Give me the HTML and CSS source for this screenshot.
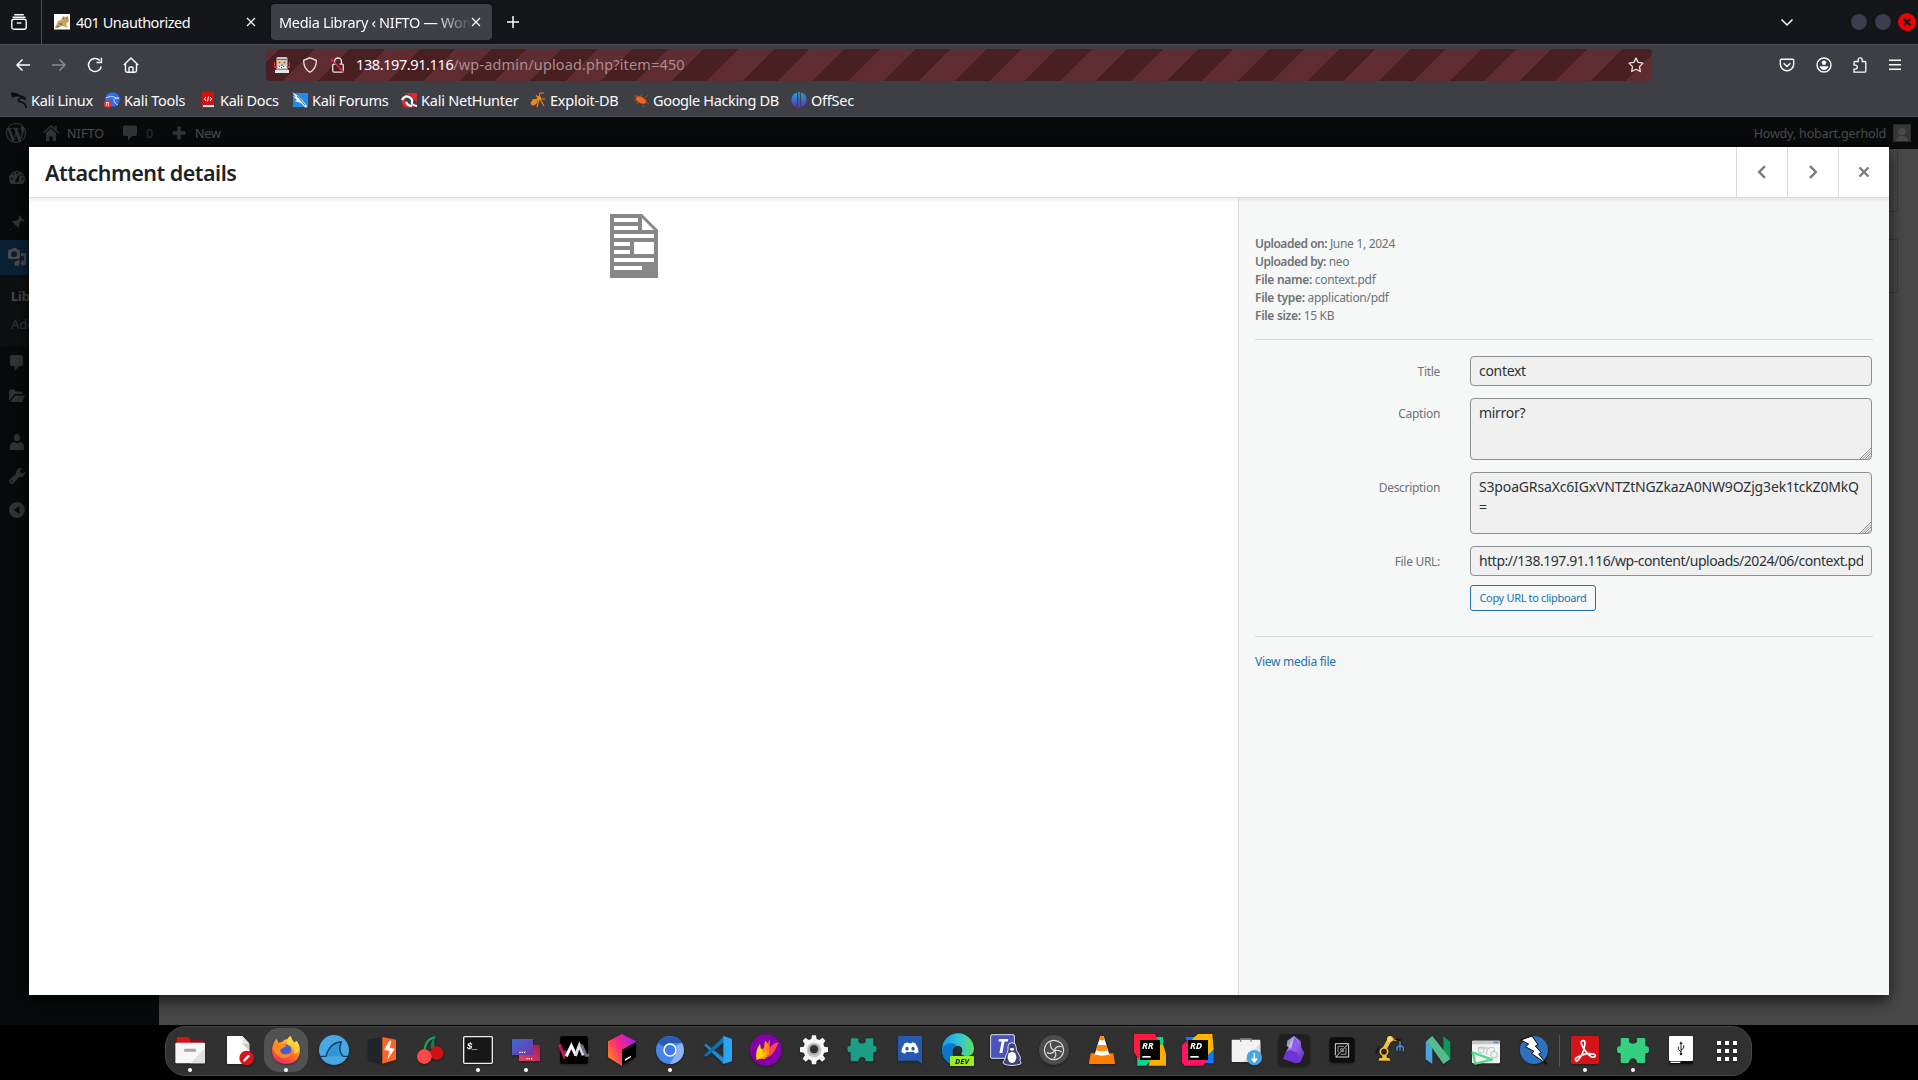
FILE: index.html
```html
<!DOCTYPE html>
<html lang="en">
<head>
<meta charset="utf-8">
<title>Media Library ‹ NIFTO — WordPress</title>
<link rel="stylesheet" href="styles.css">
</head>
<body>
<header class="browser">
  <div class="tabs">
    <div class="recent"><svg width="16" height="16" viewBox="0 0 16 16" fill="none" stroke="#fbfbfe" stroke-width="1.4"><path d="M3.2.8h9.6M1.5 3.2h13"/><rect x=".8" y="5.2" width="14.4" height="10" rx="2"/><path d="M5.8 9h4.6"/></svg></div>
    <div class="tab">
      <svg class="fav" width="16" height="16" viewBox="0 0 16 16"><path fill="#fff" d="M0 0h16v16H0z"/><path fill="#c8a265" d="M1 14l3-7 3-1 2-4 2 1 3-1 1 5-3 3 2 4-5-2-4 1z"/><path fill="#7a5a2c" d="M9 4h1v1H9zM12 4h1v1h-1zM5 9l4 1-3 1zM1 14l3-2 2 1z"/><path fill="none" stroke="#222" d="M0 15.500h16" opacity=".5"/></svg>
      <span class="tabtext t1">401 Unauthorized</span>
      <svg class="x" width="10" height="10" viewBox="0 0 10 10"><path d="M1 1l8 8M9 1L1 9"/></svg>
    </div>
    <div class="tab active">
      <span class="tabtext t2">Media Library ‹ NIFTO — WordPress</span>
      <svg class="x" width="10" height="10" viewBox="0 0 10 10"><path d="M1 1l8 8M9 1L1 9"/></svg>
    </div>
    <svg class="plus" width="14" height="14" viewBox="0 0 14 14"><path d="M7 1v12M1 7h12" stroke="#fbfbfe" stroke-width="1.5"/></svg>
    <div class="wincontrols">
      <svg class="chev" width="14" height="9" viewBox="0 0 14 9"><path d="M1.500 1.500L7 7l5.500-5.500" fill="none" stroke="#fbfbfe" stroke-width="1.5"/></svg>
      <span class="circle"></span><span class="circle"></span>
      <svg width="18" height="18" viewBox="0 0 18 18"><circle cx="9" cy="9" r="9" fill="#f00000"/><path d="M5.500 5.500l7 7M12.500 5.500l-7 7" stroke="#16171b" stroke-width="2.300"/></svg>
    </div>
  </div>
  <div class="toolbar">
    <nav class="navbtns">
      <svg width="16" height="16" viewBox="0 0 16 16" fill="none" stroke="#fbfbfe" stroke-width="1.5"><path d="M15 8H2M7.500 2.500L2 8l5.500 5.500"/></svg>
      <svg width="16" height="16" viewBox="0 0 16 16" fill="none" stroke="#88898d" stroke-width="1.5"><path d="M1 8h13M8.500 2.500L14 8l-5.500 5.500"/></svg>
      <svg width="16" height="16" viewBox="0 0 16 16" fill="none" stroke="#fbfbfe" stroke-width="1.500"><path d="M14.300 9.500a6.500 6.500 0 1 1-1.600-6M9.500 5.600h4.900V.8"/></svg>
      <svg width="16" height="16" viewBox="0 0 16 16" fill="none" stroke="#fbfbfe" stroke-width="1.400"><path d="M.8 8L8 1l7.200 7M2.500 7v6.500q0 1.700 1.700 1.700h7.600q1.700 0 1.700-1.700V7M6 15v-4q0-1 1-1h2q1 0 1 1v4"/></svg>
    </nav>
    <div class="urlbar">
      <svg class="bot" width="16" height="16" viewBox="0 0 16 16"><path fill="#c8c8c8" d="M3.500 0h9l1 1v11H2.500V1z"/><path fill="#e22b33" d="M0 5h1v4h2v2H0zM15 5h1v6h-3V9h2z"/><path fill="#ffb13d" d="M4 4h3v3H4zM9 4h3v3H9z"/><path fill="#b02a00" d="M5 5h1v1H5zM10 5h1v1h-1z"/><path fill="#6e6e6e" d="M3 2h10v1H3zM7.500 7h1v2h-1z"/><path fill="#fff" d="M4 9h8v2H4z"/><path fill="#444" d="M5 9h1v1H5zM7 10h1v1H7zM9 9h1v1H9z"/><path fill="#e6e6e6" d="M1 13h14v3H1z"/><path fill="#888" d="M2 12h12v1H2z"/></svg>
      <svg width="16" height="16" viewBox="0 0 16 16" fill="none" stroke="#ece0e1" stroke-width="1.300"><path d="M8 .8l6.300 2.500q.3 8-6.300 12Q1.400 11.300 1.700 3.300z"/></svg>
      <svg width="16" height="16" viewBox="0 0 16 16" fill="none" stroke="#ece0e1" stroke-width="1.300"><path d="M4.500 6V4.500a3.500 3.500 0 0 1 7 0V7"/><path d="M6 7.200H4.200q-1.500 0-1.500 1.500v5q0 1.500 1.500 1.500h7.600q1.500 0 1.500-1.500v-5q0-1.500-1.500-1.500H9.500"/><path d="M1 2l13 13.500" stroke="#f0244b" stroke-width="1.500"/></svg>
      <span class="url"><span class="host">138.197.91.116</span><span class="path">/wp-admin/upload.php?item=450</span></span>
      <svg class="star" width="16" height="16" viewBox="0 0 16 16" fill="none" stroke="#ece0e1" stroke-width="1.300" stroke-linejoin="round"><path d="M8 1l2.100 4.400 4.900.7-3.500 3.500.8 4.900L8 12.200l-4.300 2.300.8-4.900L1 6.100l4.900-.7z"/></svg>
    </div>
    <div class="actions">
      <svg width="16" height="16" viewBox="0 0 16 16" fill="none" stroke="#fbfbfe" stroke-width="1.400"><path d="M2.500 2.200h11q1.200 0 1.200 1.200V7a6.700 6.700 0 0 1-13.400 0V3.400q0-1.200 1.200-1.200zM4.600 6.300L8 9.500l3.400-3.200"/></svg>
      <svg width="16" height="16" viewBox="0 0 16 16"><circle cx="8" cy="8" r="7" fill="none" stroke="#fbfbfe" stroke-width="1.400"/><circle cx="8" cy="5.800" r="2.300" fill="#fbfbfe"/><path d="M3.500 9.300h9Q11.500 13 8 13T3.500 9.300z" fill="#fbfbfe"/></svg>
      <svg width="16" height="16" viewBox="0 0 16 16" fill="none" stroke="#fbfbfe" stroke-width="1.300"><path d="M2 15.200h10.500q1.300 0 1.300-1.300V5.500q0-1-1-1h-2.600V2.800a2 2 0 0 0-4 0v1.700H3q-1 0-1 1v2.600h1.300a2 2 0 0 1 0 4H2z"/></svg>
      <svg width="12" height="16" viewBox="0 0 12 16" stroke="#fbfbfe" stroke-width="1.400"><path d="M0 3.200h12M0 7.700h12M0 12.300h12"/></svg>
    </div>
  </div>
  <nav class="bookmarks">
    <a><svg width="16" height="16" viewBox="0 0 16 16" fill="none" stroke="#0b0b0c" stroke-width="1.600"><path d="M0 1q5 0 9 3M1 5q3-2 8-1 5 1 5 3-4-2-6 0t2 3q5 1 5 6M0 3l5-1"/></svg><span>Kali Linux</span></a>
    <a class="wide"><svg width="16" height="16" viewBox="0 0 16 16"><circle cx="8.500" cy="7.500" r="7.300" fill="#2f6fe8"/><path fill="none" stroke="#cfe2ff" d="M2 6q5-3 8-1t5 1q-6 0-5 3t4 4"/><circle cx="3.500" cy="12" r="3.800" fill="#e3352f"/><path stroke="#fff" d="M2 10.500h3M2.600 10.500v3.500M4.400 10.500v3.500" stroke-width=".7"/></svg><span>Kali Tools</span></a>
    <a><svg width="16" height="16" viewBox="0 0 16 16"><path fill="#d21313" d="M2 0h12v16H2z"/><path fill="#f2f2f2" d="M3 13h11v2H3z"/><path d="M6 5L4.500 7 6 9M10 5l1.500 2L10 9M8.500 4.500l-1 5" stroke="#fff" fill="none"/></svg><span>Kali Docs</span></a>
    <a><svg width="16" height="16" viewBox="0 0 16 16"><path fill="#1d8bf0" d="M1 1h15v14H1z"/><path fill="#fff" d="M0 0l6 4 5 5 4 5-1 2-5-5-6-2 2-1-4-4 3 1z"/><path stroke="#223" d="M5 4l8 9" stroke-width=".8"/></svg><span>Kali Forums</span></a>
    <a class="wide"><svg width="16" height="16" viewBox="0 0 16 16"><path fill="#e3262e" d="M3 1h13v10l-6-7z"/><path fill="#e3262e" d="M0 9l4-2 4 6 5 1-4 2-6-1z"/><path fill="none" stroke="#fff" stroke-width="2.200" d="M1 8q3-5 7-3t3 5 5 4M5 10q2 4 6 4"/></svg><span>Kali NetHunter</span></a>
    <a class="wide"><svg width="16" height="16" viewBox="0 0 16 16" fill="none" stroke="#f08a1c" stroke-width="1.100"><path d="M9 6l-5 7M8 7L2 8M9 7l-2 8M10 7l5 0M10 7l4 7M9 6l1-5h4M8 6L6 3M3 9l3 2"/><ellipse cx="4" cy="10.500" rx="3" ry="1.900" fill="#f08a1c" transform="rotate(-35 4 10.500)"/><circle cx="9" cy="6" r="1.500" fill="#f08a1c"/></svg><span>Exploit-DB</span></a>
    <a><svg width="16" height="16" viewBox="0 0 16 16"><ellipse cx="8" cy="8" rx="5.500" ry="3.200" fill="#f0641e" transform="rotate(28 8 8)"/><path stroke="#c4541c" stroke-width=".8" d="M1 4h4M1 8h3M3 12l3-2M10 13l1 2M12 6l3-3M13 10l3 2M8 4l1-2" fill="none"/></svg><span>Google Hacking DB</span></a>
    <a class="wide"><svg width="16" height="16" viewBox="0 0 16 16"><defs><linearGradient id="os" gradientUnits="userSpaceOnUse" x1="0" y1="0" x2="0" y2="16"><stop stop-color="#25a7d0"/><stop offset="1" stop-color="#5b2bc6"/></linearGradient></defs><path fill="url(#os)" d="M6 .5Q0 2.500.5 8.500q.3 4 4.500 6.500l1-5zM10 .5q6 2 5.500 8-.3 4-4.500 6.500l-1-5zM7.200 0h1.600v10l1 6H6.300l.9-6z"/></svg><span>OffSec</span></a>
  </nav>
</header>

<main class="page">
  <div class="adminbar">
    <svg class="wp" width="20" height="20" viewBox="0 0 20 20"><path fill="#a7aaad" d="M20 10c0-5.510-4.490-10-10-10C4.480 0 0 4.490 0 10c0 5.520 4.480 10 10 10 5.510 0 10-4.480 10-10zM7.780 15.370L4.370 6.220c.55-.02 1.170-.08 1.170-.08.5-.06.44-1.130-.06-1.110 0 0-1.450.11-2.370.11-.18 0-.37 0-.58-.01C4.120 2.690 6.870 1.110 10 1.110c2.330 0 4.450.87 6.050 2.340-.68-.11-1.650.39-1.650 1.580 0 .74.45 1.360.9 2.100.35.61.55 1.360.55 2.460 0 1.490-1.400 5-1.400 5l-3.030-8.370c.54-.02.82-.17.82-.17.5-.05.44-1.250-.06-1.220 0 0-1.440.12-2.380.12-.87 0-2.330-.12-2.330-.12-.5-.03-.56 1.200-.06 1.220l.92.080 1.260 3.410zM17.410 10c.24-.64.74-1.870.43-4.250.7 1.290 1.050 2.710 1.050 4.250 0 3.290-1.730 6.240-4.400 7.780.97-2.590 1.940-5.200 2.920-7.780zM6.100 18.090C3.120 16.650 1.110 13.530 1.110 10c0-1.300.23-2.480.72-3.590C3.250 10.300 4.670 14.200 6.100 18.090zm4.030-6.630l2.580 6.980c-.86.29-1.760.45-2.710.45-.79 0-1.570-.11-2.290-.33.81-2.380 1.620-4.740 2.420-7.100z"/></svg>
    <svg class="home" width="16" height="16" viewBox="0 0 16 16" fill="#a7aaad"><path d="M8 3.500l5 4.500v8H9.800v-4.500H6.200V16H3V8z"/><path d="M8 0L0 7.200l1 1L8 2l7 6.200 1-1-2.300-2V1h-2v2.400z"/></svg>
    <span class="txt site">NIFTO</span>
    <svg class="cmt" width="14" height="16" viewBox="0 0 14 16" fill="#a7aaad"><path d="M2 .5h10q2 0 2 2v6.500q0 2-2 2H9l-4 4.700V11H2q-2 0-2-2V2.500q0-2 2-2z"/></svg>
    <span class="txt zero">0</span>
    <svg class="add" width="14" height="14" viewBox="0 0 14 14"><path d="M5.300.5h3.400v4.800H13.500v3.400H8.700v4.800H5.300V8.700H.5V5.300h4.800z" fill="#a7aaad"/></svg>
    <span class="txt new">New</span>
    <span class="txt howdy">Howdy, hobart.gerhold</span>
    <svg class="avatar" width="18" height="18" viewBox="0 0 18 18"><path fill="#8c8f94" d="M0 0h18v18H0z"/><path fill="#b4b4b6" d="M1 1h16v16H1z"/><circle cx="9" cy="7.500" r="3.800" fill="#f4f4f4"/><path fill="#f4f4f4" d="M3 17q1-5 6-5t6 5z"/></svg>
  </div>
  <div class="admin">
    <aside class="menu">
      <a class="m1"><svg viewBox="0 0 16 16"><path fill-rule="evenodd" d="M2 14q-2-2-2-5.500a8 7.500 0 0 1 16 0Q16 12 14 14zM7.200 2v2h1.600V2zM3.300 3.800l1.200 1.400 1-1-1.200-1.300zM1.500 8v1.600h2V8zM12.500 8v1.600h2V8zM11 3.500L7.500 8.500q-2 1.500-1 3.500 2 1.500 3-.5zm1.500.8l-.3 1.500 1.300.6.500-1.200z"/></svg></a>
      <a class="m2"><svg viewBox="0 0 16 16"><path d="M10 0l6 6-1.500.5-1.700-.5-2.600 2.600q.5 2.500-.7 4.200L6 9.500 1 15.500l-.8.300.3-.8L6.300 10 3 6.500Q4.800 5.300 7.300 5.800L10 3.200 9.500 1.500z"/></svg></a>
      <a class="current"><svg viewBox="0 0 18 18"><path fill-rule="evenodd" d="M1.500 1.500h2L5 0h3l1.500 1.500h1Q12 1.500 12 3v6.500q0 1.500-1.500 1.500h-9Q0 11 0 9.500V3q0-1.500 1.500-1.500zM6 3.200a3 3 0 1 0 0 6 3 3 0 1 0 0-6zM13 5h5v10a2.500 2.500 0 1 1-2-2.500V8h-3zM9.500 12h2v3.500a2.500 2.500 0 1 1-2-2.500z"/></svg></a>
      <div class="sub"><b>Library</b><span>Add New Media File</span></div>
      <a class="m4"><svg viewBox="0 0 16 16"><path d="M3 0h9q2 0 2 2v7q0 2-2 2H10l-4.500 5V11H3Q1 11 1 9V2Q1 0 3 0z"/></svg></a>
      <a class="m5"><svg viewBox="0 0 16 16"><path d="M0 3q0-1.500 1.500-1.500H5l1.500 2h5q2 0 2 1.500v1H6L3 9 0 13zM6.500 7.500H16L13 14H1.500L4 10z"/></svg></a>
      <a class="m6"><svg viewBox="0 0 16 16"><ellipse cx="8" cy="3.500" rx="3" ry="3.500"/><path d="M1 16v-3q0-4.500 4.500-5L8 9.500 10.500 8Q15 8.500 15 13v3z"/></svg></a>
      <a class="m7"><svg viewBox="0 0 16 16"><path fill-rule="evenodd" d="M16 3.500q.5 4.500-3.500 5.500H10L4.800 15q-2 1.800-4 0-1.600-2 .2-3.800L7 6q-.5-4.500 4-6h2.500L11 2.500 12 5l2 .3zM2.600 12.300a1 1 0 1 0 .1 2 1 1 0 1 0-.1-2z"/></svg></a>
      <a class="m8"><svg viewBox="0 0 16 16"><path fill-rule="evenodd" d="M8 0a8 8 0 1 0 0 16A8 8 0 1 0 8 0zM10.500 4v8L4.500 8z"/></svg></a>
    </aside>
    <div class="content"><div class="panel p1"></div><div class="panel p2"></div></div>
  </div>
  <div class="backdrop"></div>
  <section class="modal">
    <div class="titlebar">
      <h1>Attachment details</h1>
      <button><svg width="10" height="14" viewBox="0 0 10 14"><path d="M8 1.200L2.200 7 8 12.800"/></svg></button>
      <button><svg width="10" height="14" viewBox="0 0 10 14"><path d="M2 1.200L7.800 7 2 12.800"/></svg></button>
      <button><svg width="12" height="12" viewBox="0 0 12 12"><path d="M1.500 1.500l9 9M10.500 1.500l-9 9"/></svg></button>
    </div>
    <div class="body">
      <div class="preview">
        <svg width="48" height="64" viewBox="0 0 48 64"><path fill="#888" fill-rule="evenodd" d="M0 0h32l16 16v48H0zM4 4v4h24V4zM4 12v4h24v-4zM32 4v12h12zM4 20v4h40v-4zM4 28v4h16v-4zM24 28v12h20V28zM4 36v4h16v-4zM4 44v4h40v-4zM4 52v4h28v-4z"/></svg>
      </div>
      <div class="info">
        <div class="meta">
          <div><b>Uploaded on:</b> June 1, 2024</div>
          <div><b>Uploaded by:</b> neo</div>
          <div><b class="file">File name:</b> context.pdf</div>
          <div><b class="file">File type:</b> application/pdf</div>
          <div><b class="file">File size:</b> 15 KB</div>
        </div>
        <div class="settings">
          <div class="row"><label>Title</label><div class="field"><span>context</span></div></div>
          <div class="row"><label>Caption</label><div class="field area"><span>mirror?</span><svg class="grip" width="11" height="11" viewBox="0 0 11 11"><path d="M0 11L11 0M2.500 11L11 2.500M5 11l6-6M7.500 11L11 7.500"/></svg></div></div>
          <div class="row"><label>Description</label><div class="field area"><span class="code">S3poaGRsaXc6IGxVNTZtNGZkazA0NW9OZjg3ek1tckZ0MkQ<br>=</span><svg class="grip" width="11" height="11" viewBox="0 0 11 11"><path d="M0 11L11 0M2.500 11L11 2.500M5 11l6-6M7.500 11L11 7.500"/></svg></div></div>
          <div class="row"><label>File URL:</label><div class="stack"><div class="field"><span class="link">http://138.197.91.116/wp-content/uploads/2024/06/context.pdf</span></div><button class="copy">Copy URL to clipboard</button></div></div>
        </div>
        <a class="view">View media file</a>
      </div>
    </div>
  </section>
</main>

<footer class="shell">
<div class="dock">
<svg width="0" height="0" class="defs"><defs>
<linearGradient id="ff" x1=".8" y1="0" x2=".3" y2="1"><stop stop-color="#ffe14d"/><stop offset=".5" stop-color="#ff7a1f"/><stop offset="1" stop-color="#f0246a"/></linearGradient>
<linearGradient id="tb" x1="0" y1=".8" x2="1" y2=".2"><stop stop-color="#ff8a1c"/><stop offset=".45" stop-color="#ff2b73"/><stop offset="1" stop-color="#a41cf5"/></linearGradient>
<linearGradient id="sc1" x1="0" x2="1" y2="1"><stop stop-color="#3a6fd6"/><stop offset="1" stop-color="#7a2fa8"/></linearGradient>
<linearGradient id="sc2" x1="1" x2="0" y2="1"><stop stop-color="#a01f55"/><stop offset="1" stop-color="#e8405c"/></linearGradient>
<linearGradient id="ed" x1="0" y1="0" x2="1" y2="0"><stop stop-color="#1d95e0"/><stop offset=".5" stop-color="#2fc3e0"/><stop offset="1" stop-color="#5ee05a"/></linearGradient>
<linearGradient id="ob" x2="1" y2="1"><stop stop-color="#c6a6ff"/><stop offset="1" stop-color="#5b22c0"/></linearGradient>
<path id="pz" d="M15 12h18q4 0 4 5-2 3-1 6 3 6 12 6t12-6q1-3-1-6 0-5 4-5h18q4 0 4 4v17q0 4 3 4 8-1 8 10t-8 10q-3-1-3 4v22q0 4-4 4H63q-4 0-4-5-2-9-11-9t-11 9q0 5-4 5H15q-4 0-4-4V61q0-5-3-4-8 1-8-10t8-10q3 1 3-4V16q0-4 4-4z"/>
</defs></svg>
<i class="run"><svg viewBox="0 0 96 96"><path fill="#8d1216" d="M8 16h76q3 0 3 3v12H8z"/><path fill="#d51418" d="M12 9h30l7 7v12H8V13q0-4 4-4z"/><rect x="4" y="26" width="89" height="62" rx="3" fill="#f7f7f7"/><path fill="#e0e0e0" d="M93 42L50 88h43z"/><rect x="30" y="44" width="36" height="9" rx="3" fill="#a5a5a5"/></svg></i>
<i><svg viewBox="0 0 96 96"><path fill="#fff" d="M17 6h44l21 24v60H17q-2 0-2-2V8q0-2 2-2z"/><path fill="#c9c9c9" d="M60 27l22 24V30z"/><path fill="#e6e6e6" d="M61 6v22h21z"/><circle cx="74" cy="72" r="22" fill="#d4151b"/><path stroke="#fff" stroke-width="7" stroke-linecap="round" d="M67 79l13-13"/></svg></i>
<i class="run hot"><svg viewBox="0 0 96 96"><path fill="url(#ff)" d="M50 16q8 0 15 3 5 3 6 9l8-7q12 14 11 31-3 36-41 38Q9 89 6 52q0-24 14-38l5 12 12-3q6-7 13-7z"/><circle cx="47" cy="48" r="17" fill="#4a5bd8"/><path fill="#ff8b1d" d="M8 38q10-10 22-10l17 4q2 7-8 9l-8 6q-1 10 10 14 12 2 20-5-4 18-22 16-22-3-31-34z"/><path fill="#ffd23c" d="M62 5q-14 8-12 23 4 6 14 8 12 8 10 24 13-6 14-18 0-14-9-22l-5 6Q66 18 62 5z"/></svg></i>
<i><svg viewBox="0 0 96 96"><circle cx="48" cy="48" r="45" fill="#47a8e5"/><path fill="#3295d8" d="M25 67q10-40 45-42-8 22 8 42z"/><path fill="none" stroke="#133a63" stroke-width="4" d="M5 67h19c8-30 22-42 46-43-8 18-4 33 5 43h16"/></svg></i>
<i><svg viewBox="0 0 96 96"><path fill="#20242b" d="M6 17l43-8v80L6 78z"/><path fill="#ff6423" d="M49 9l41 8v60l-41 12z"/><path fill="#fff" d="M70 20L54 48l16 2-6 28 22-34-15-3 5-20z"/></svg></i>
<i><svg viewBox="0 0 96 96"><path fill="none" stroke="#1ea25c" stroke-width="6" d="M31 52C32 28 42 14 64 9"/><path fill="#108048" d="M64 7q-16 14-14 38l12-2q-4-18 2-36z"/><circle cx="68" cy="57" r="20" fill="#cf1216"/><circle cx="31" cy="68" r="22" fill="#fd4848"/></svg></i>
<i class="run"><svg viewBox="0 0 96 96"><rect x="5" y="8" width="86" height="80" rx="3" fill="#171717" stroke="#eee" stroke-width="4"/><text x="14" y="44" fill="#fff" font-family="Liberation Mono" font-weight="700" font-size="28">$_</text></svg></i>
<i class="run"><svg viewBox="0 0 96 96"><path fill="url(#sc2)" d="M27 33h63v48H27z"/><path fill="url(#sc1)" d="M6 15h63v48H6z"/><path fill="#fff" d="M28 53h4v4h-4zM35 53h4v4h-4zM42 53h4v4h-4zM49 72h4v4h-4zM56 72h4v4h-4zM63 72h4v4h-4z"/></svg></i>
<i><svg viewBox="0 0 96 96"><rect x="6" y="6" width="84" height="84" rx="8" fill="#000"/><g fill="none" stroke-width="9"><path stroke="#c2185b" d="M4 31l14 34 6-15"/><path stroke="#fff" d="M25 67l15-32 14 30"/><path stroke="#ddd" d="M52 66l12-32 12 30"/><path stroke="#6d7180" d="M70 32l14 32 10 0"/></g></svg></i>
<i><svg viewBox="0 0 96 96"><path fill="url(#tb)" d="M48 0l42 22v48L48 96 6 70V22z"/><path fill="#000" d="M48 47l42-23v46L48 96z"/><path fill="#fff" d="M57 75l18-10v5L57 81z"/></svg></i>
<i class="run"><svg viewBox="0 0 96 96"><circle cx="48" cy="48" r="42" fill="#4a86e8"/><path fill="#2a5cb8" d="M12 27a42 42 0 0 1 72 0H48q-12 0-18 11z"/><path fill="#8db4f5" d="M84 27a42 42 0 0 1-36 63l17-31q7-12 0-24z"/><circle cx="48" cy="48" r="20" fill="#fff"/><circle cx="48" cy="48" r="15.500" fill="#3a7cee"/></svg></i>
<i><svg viewBox="0 0 96 96"><path fill="#1f8ad2" d="M6 34l6-5 54 44v17z"/><path fill="#0b72b8" d="M6 64l6 5 54-44V6z"/><path fill="#2aa5ef" d="M64 6l26 9v67l-26 8z"/></svg></i>
<i><svg viewBox="0 0 96 96"><circle cx="48" cy="48" r="48" fill="#8400a8"/><path fill="#ff4a4a" d="M24 72q8-20 20-34 10-10 16-22 0 14 0 24 8-10 26-16-4 10-12 26-12 20-32 22z"/><path fill="#ff8a1c" d="M28 74q2-20 14-34 0-10 4-20 8 6 10 16l2 22-14 18z"/><path fill="#ffd500" d="M20 78q-6-26 10-48 0 12 8 18l0 14 14-14q-4 22-32 30z"/></svg></i>
<i><svg viewBox="0 0 96 96"><path fill="#f5f5f5" d="M42 4h12l2 11 8 3 10-7 8 9-6 10 3 8 11 2v14l-11 2-4 8 7 10-9 9-9-7-8 4-2 11H42l-2-11-8-4-9 7-9-9 7-10-4-8-11-2V40l11-2 3-8-6-10 8-9 10 7 8-3z"/><circle cx="48" cy="48" r="22" fill="#c8c8c8"/><circle cx="48" cy="46" r="17" fill="#aaa"/><circle cx="48" cy="46" r="12" fill="#303030"/></svg></i>
<i><svg viewBox="0 0 96 96"><use href="#pz" fill="#1b9e85" transform="translate(4 2) scale(.92)"/></svg></i>
<i><svg viewBox="0 0 96 96"><path fill="#2659b0" d="M15 6h66q3 0 3 3v81L72 80H15q-3 0-3-3V9q0-3 3-3z"/><path fill="#fff" d="M32 28l9-3 2 3h10l2-3 9 3q9 14 10 26-5 4-11 5l-3-5H36l-3 5q-6-1-11-5 1-13 10-26z"/><ellipse cx="39" cy="44" rx="5" ry="5.500" fill="#2659b0"/><ellipse cx="57" cy="44" rx="5" ry="5.500" fill="#2659b0"/></svg></i>
<i><svg viewBox="0 0 96 96"><path fill="url(#ed)" d="M0 48a48 48 0 0 1 96-4q0 22-22 22-16 0-16-8 6-8 0-18-10-10-22 0-12 14-4 34 4 10 12 18Q2 88 0 48z"/><path fill="#0b74c8" d="M4 38Q26 20 44 34q-14 4-12 22 0 22 18 38Q8 94 1 56q-1-10 3-18z"/><circle cx="48" cy="48" r="11" fill="#272c30"/><rect x="24" y="66" width="72" height="30" rx="3" fill="#9df01a"/><text x="60" y="89" text-anchor="middle" font-family="Noto Sans" font-weight="700" font-size="23" fill="#111">DEV</text></svg></i>
<i><svg viewBox="0 0 96 96"><rect x="2" y="2" width="71" height="71" rx="4" fill="#4b53bc" stroke="#dcdcf0" stroke-width="3"/><text x="36" y="57" text-anchor="middle" font-family="Noto Sans" font-weight="700" font-size="56" fill="#fff">T</text><path fill="#3c4478" stroke="#dcdcf0" stroke-width="3" d="M54 38q0-12 12-12t12 12q0 12 8 22t4 20q5 4 2 10l-12 3q-14 3-28 0l-12-4q-2-8 4-11 2-14 8-22 3-8 2-18z"/><ellipse cx="66" cy="70" rx="13" ry="17" fill="#fff"/><ellipse cx="66" cy="46" rx="7" ry="4" fill="#fff"/></svg></i>
<i><svg viewBox="0 0 96 96"><circle cx="48" cy="48" r="45" fill="#4c4c4c"/><g fill="none" stroke="#dedede" stroke-width="3.500"><circle cx="48" cy="48" r="29"/><path d="M49 50Q34 42 38 26M49 50q4-16 22-12M49 50q10 12-2 24M49 50q-6 12-22 6M49 50q12-4 22 4"/></g></svg></i>
<i><svg viewBox="0 0 96 96"><path fill="#ff7e00" d="M14 58h68l5 30q0 2-2 2H11q-2 0-2-2z"/><path fill="#fff" d="M43 6h10l19 62q-24 10-48 0z"/><path fill="#ff8a14" d="M43 6h10l4 13H39zM35 33h26l5 16q-18 6-36 0z"/><path fill="#ff7e00" d="M26 61q22 8 44 0l2 10q-24 8-48 0z"/></svg></i>
<i><svg viewBox="0 0 96 96"><path fill="#00d98a" d="M50 9h37v40L34 95H10V60z"/><path fill="#ffae00" d="M62 24l26 10 8 26v35H44z"/><path fill="#ff1a44" d="M0 0h62l18 30-66 46L0 54z"/><path fill="#000" d="M18 18h60v60H18z"/><path fill="#fff" d="M25 66h25v5H25z"/><text x="24" y="46" font-family="Noto Sans" font-weight="700" font-size="28" fill="#fff">RR</text></svg></i>
<i><svg viewBox="0 0 96 96"><path fill="#0a7cff" d="M9 9h40l46 36v42H52z"/><path fill="#ffb400" d="M48 0h43l4 46-20 20-45-50z"/><path fill="#ff1464" d="M0 34L22 14l56 60-14 21H8L0 86z"/><path fill="#000" d="M18 18h60v60H18z"/><path fill="#fff" d="M25 66h25v5H25z"/><text x="24" y="46" font-family="Noto Sans" font-weight="700" font-size="28" fill="#fff">RD</text></svg></i>
<i><svg viewBox="0 0 96 96"><rect x="5" y="17" width="86" height="67" rx="3" fill="#f2f2f2"/><path fill="#dcdcdc" d="M91 26v58H40z"/><path fill="none" stroke="#8a8a8a" stroke-width="4" d="M32 24v-9h31v9"/><circle cx="73" cy="71" r="23" fill="#45a6e4"/><path fill="none" stroke="#fff" stroke-width="5" d="M73 58v24M65 74l8 9 8-9"/></svg></i>
<i><svg viewBox="0 0 96 96"><rect x="0" y="0" width="96" height="96" rx="16" fill="#202020"/><path fill="url(#ob)" d="M48 6l20 15 2 20 9 15-11 28-14 3-38-13 10-24z"/><path fill="#ded0ff" opacity=".7" d="M48 6L40 44l-14-8 2-16z"/><path fill="#6d33d4" d="M36 48l22 8 8 28-12 3-38-13 8-20z"/><path fill="#8d5cf0" d="M50 8l10 22-2 26-18-12z"/></svg></i>
<i><svg viewBox="0 0 96 96"><rect x="10" y="10" width="76" height="76" rx="12" fill="#0d0d0d"/><g fill="none" stroke="#ddd" stroke-width="3"><path d="M28 64V29h40L29 69h39V32"/><path d="M36 56V37h18M60 42v19H44M44 50v-6h6M53 47v6h-6" stroke="#999"/></g></svg></i>
<i><svg viewBox="0 0 96 96"><path fill="none" stroke="#f1bf3c" stroke-width="13" stroke-linejoin="round" d="M32 76l-2-28 18-34"/><path fill="none" stroke="#c99a30" stroke-width="7" d="M48 15l20 3"/><circle cx="48" cy="15" r="9" fill="#ffd65c"/><path fill="none" stroke="#161616" stroke-width="5" d="M16 36l-10 22M62 15l20 4"/><circle cx="30" cy="53" r="11" fill="#222" stroke="#f1bf3c" stroke-width="5"/><path fill="#f1bf3c" d="M16 72h30l3 8H14z"/><path fill="none" stroke="#4b90cf" stroke-width="4" d="M78 22v12l-9 6v10M78 34l10 6v12M78 36v14"/></svg></i>
<i><svg viewBox="0 0 96 96"><path fill="#46a4df" d="M11 24L31 6v84L11 76z"/><path fill="#0c9a56" d="M64 6l21 18v52L64 90z"/><path fill="#55bb88" d="M31 6l54 68-21 16L15 20z"/></svg></i>
<i><svg viewBox="0 0 96 96"><rect x="6" y="20" width="84" height="68" rx="3" fill="#f2f2f2"/><path fill="#c6c6c6" d="M6 23q0-3 3-3h78q3 0 3 3v8H6z"/><path fill="#6c8fc9" d="M70 22h16v6H70z"/><g fill="none" stroke="#b7bfc9" stroke-width="3"><circle cx="34" cy="48" r="9"/><circle cx="72" cy="62" r="10"/><path d="M50 62q-2-20 14-22 14 2 8 12M22 42h34"/></g><path fill="none" stroke="#55db8a" stroke-width="7" stroke-linejoin="round" d="M8 55l8 34 50-12z"/></svg></i>
<i><svg viewBox="0 0 96 96"><circle cx="48" cy="48" r="42" fill="#2c72be"/><path fill="#fff" stroke="#000" stroke-width="3" d="M8 18L42 6l18 26-8 4 18 20-8 4 24 30-46-32 8-6-26-14 10-8z"/></svg></i>
<b class="sep"></b>
<i class="run"><svg viewBox="0 0 96 96"><rect x="6" y="6" width="84" height="84" rx="5" fill="#d3151a"/><path fill="none" stroke="#fff" stroke-width="5" d="M42 20q-8 0-4 12 8 20 28 36 12 4 13-3t-24-6q-14 2-30 11-8 4-5 9t12-6q14-20 16-46 0-8-6-7z"/></svg></i>
<i class="run"><svg viewBox="0 0 96 96"><use href="#pz" fill="#35d07f"/></svg></i>
<i><svg viewBox="0 0 96 96"><rect x="12" y="6" width="72" height="84" rx="3" fill="#111"/><rect x="12" y="6" width="72" height="75" rx="3" fill="#fff"/><path stroke="#fff" stroke-width="4" d="M16 85h30"/><g stroke="#222" fill="none" stroke-width="3"><path d="M48 26v34M48 54l-8-8v-8M48 48l8-6v-8"/></g><path fill="#222" d="M43 30l5-8 5 8z"/><circle cx="48" cy="60" r="4" fill="#222"/></svg></i>
<i class="apps"><svg viewBox="0 0 96 96"><path fill="#fff" d="M18 21h12v12H18zM42 21h12v12H42zM66 21h12v12H66zM18 45h12v12H18zM42 45h12v12H42zM66 45h12v12H66zM18 69h12v12H18zM42 69h12v12H42zM66 69h12v12H66z"/></svg></i>
</div>
</footer>
</body>
</html>
```
FILE: styles.css
```css
* { box-sizing: border-box; }
body { margin: 0; width: 1918px; height: 1080px; overflow: hidden; background: #000; display: flex; flex-direction: column; font-family: "Noto Sans", sans-serif; }
svg { display: block; flex: none; }
button { font: inherit; margin: 0; }

/* browser chrome */
.browser { height: 117px; background: #3e3f44; color: #fbfbfe; font-size: 14.5px; border-bottom: 1px solid #4c4d54; letter-spacing: -.35px; }
.tabs { height: 45px; background: #15161a; border-bottom: 1px solid #4c4d54; display: flex; align-items: center; padding-bottom: 8px; }
.recent { width: 42px; height: 45px; flex: none; margin-bottom: -8px; border-right: 1px solid #4c4d54; padding: 14px 0 0 11px; }
.tab { width: 221px; height: 36px; display: flex; align-items: center; margin-top: 8px; flex: none; }
.tab:not(.active) { width: 229px; padding: 0 15px 0 12px; }
.fav { margin-right: 6px; }
.tab.active { background: #3f4045; border-radius: 4px; padding: 0 11px 0 8px; box-shadow: 0 0 3px rgba(0,0,0,.5); }
.tabtext { flex: 1; white-space: nowrap; overflow: hidden; }
.t1 { letter-spacing: -.49px; }
.t2 { letter-spacing: -.33px; -webkit-mask-image: linear-gradient(90deg, #000 155px, transparent 193px); mask-image: linear-gradient(90deg, #000 155px, transparent 193px); }
.x { stroke: #fbfbfe; stroke-width: 1.2; fill: none; }
.plus { margin: 8px 0 0 14px; }
.wincontrols { margin: 8px 2px 0 auto; display: flex; align-items: center; }
.chev { margin-right: 57px; }
.circle { width: 16px; height: 16px; border-radius: 50%; background: #3b3e4e; margin-right: 8px; box-shadow: 0 0 1px #000; }
.circle + svg { margin-left: -1px; }
.toolbar { height: 40px; display: flex; align-items: center; padding-left: 15px; }
.navbtns { display: flex; gap: 20px; width: 251px; }
.urlbar { width: 1386px; height: 32px; border-radius: 4px; display: flex; align-items: center; padding: 0 8px; background: repeating-linear-gradient(-45deg, #5f2d31 0 18.4px, #4a1f22 18.4px 43.4px, #5f2d31 43.4px 50px); }
.urlbar svg { margin-right: 12px; }
.urlbar .star { margin: 0 0 0 auto; }
.url { font-size: 14.5px; white-space: nowrap; margin: -2px 0 0 -2px; }
.host { letter-spacing: -.4px; }
.path { letter-spacing: .14px; color: #a78e91; }
.actions { display: flex; gap: 20.5px; margin-left: 127px; }
.bookmarks { display: grid; grid-template-columns: 93px 96px 92px 109px 129px 103px 158px 80px; padding-left: 11px; height: 30px; align-items: center; }
.bookmarks a { display: flex; align-items: center; gap: 4px; white-space: nowrap; }
.bookmarks .wide { letter-spacing: -.24px; }

/* admin page */
.page { height: 908px; position: relative; overflow: hidden; background: #f0f0f1; font-size: 12.5px; }
.adminbar { height: 32px; background: #1d2327; color: #f0f0f1; display: flex; align-items: center; padding: 0 7px 0 6px; letter-spacing: -.16px; }
.home { margin-left: 17px; }
.site { margin-left: 8px; width: 56px; letter-spacing: .1px; }
.zero { margin-left: 9px; width: 26px; color: #9ca2a7; }
.add { margin-right: 9px; }
.howdy { margin-left: auto; margin-right: 7px; }
.admin { display: flex; height: 876px; }
.menu { width: 159px; background: #1d2327; }
.menu a { display: flex; align-items: center; height: 34px; padding-left: 9px; }
.menu svg { width: 16px; height: 16px; fill: #a7aaad; }
.menu .m1 { margin-top: 12px; }
.menu .m2 { margin-top: 11px; }
.menu .current { background: #2271b1; height: 35px; padding-left: 8px; }
.menu .current svg { width: 18px; height: 18px; fill: #fff; margin-top: -5px; }
.menu .current svg { margin-top: -1px; }
.sub { height: 71px; background: #2c3338; padding: 7px 0 0 11px; color: #b4b9be; display: flex; flex-direction: column; line-height: 28px; font-size: 13px; }
.sub b { color: #fff; font-weight: 600; }
.menu .m5 { margin-top: -1px; }
.menu .m6 { margin-top: 12px; }
.content { flex: 1; padding: 0 20px; }
.panel { background: #f0f0f1; border: 1px solid #c3c4c7; }
.p1 { height: 63px; border-top: 0; }
.p2 { height: 54px; margin-top: 27px; }
.backdrop { position: absolute; inset: 0; background: rgba(0,0,0,.7); }
.modal { position: absolute; inset: 30px 29px; background: #fff; box-shadow: 0 5px 15px rgba(0,0,0,.7); display: flex; flex-direction: column; }
.titlebar { height: 51px; flex: none; border-bottom: 1px solid #dcdcde; display: flex; box-shadow: 0 2px 4px rgba(0,0,0,.08); position: relative; }
h1 { margin: 0; flex: 1; padding-left: 16px; font-size: 21.5px; font-weight: 600; line-height: 51px; letter-spacing: -.5px; color: #1d2327; }
.titlebar button { width: 51px; border: 0; border-left: 1px solid #dcdcde; background: none; padding: 0; display: flex; align-items: center; justify-content: center; }
.titlebar button path { fill: none; stroke: #787c82; stroke-width: 2.4; }
.body { flex: 1; display: flex; }
.preview { flex: 1; padding: 16px 0 0 581px; }
.info { width: 651px; border-left: 1px solid #dcdcde; background: #f6f7f7; padding: 37px 16px 0; font-size: 12px; color: #6d7278; letter-spacing: -.3px; }
.meta { line-height: 18px; height: 105px; border-bottom: 1px solid #dcdcde; }
.meta b { font-weight: 600; letter-spacing: -.48px; }
.meta .file { letter-spacing: -.3px; }
.settings { padding: 16px 1px 25px 0; border-bottom: 1px solid #dcdcde; display: flex; flex-direction: column; gap: 12px; }
.row { display: flex; justify-content: flex-end; gap: 30px; }
.row label { padding-top: 7px; line-height: 18px; }
.field { width: 402px; height: 30px; border: 1px solid #8c8f94; border-radius: 4px; background: #f0f0f0; padding: 0 8px; font-size: 14px; line-height: 27px; color: #2c3338; letter-spacing: -.3px; position: relative; }
.field span { display: block; overflow: hidden; white-space: nowrap; }
.area { height: 62px; line-height: 20px; padding-top: 4px; }
.area .code { letter-spacing: -.16px; }
.field .link { letter-spacing: -.46px; }
.grip { position: absolute; right: 0; bottom: 0; }
.grip path { stroke: #777; stroke-width: .8; fill: none; }
.stack { display: flex; flex-direction: column; align-items: flex-start; gap: 9px; }
.copy { width: 126px; height: 26px; border: 1px solid #2271b1; border-radius: 3px; background: #f6f7f7; color: #2271b1; font-size: 11px; letter-spacing: -.33px; padding: 0 0 2px; }
.view { display: block; margin-top: 16px; line-height: 18px; color: #2271b1; letter-spacing: -.27px; }

/* dock */
.shell { height: 55px; padding: 1px 0 0 165px; }
.dock { width: 1587px; height: 50px; background: #313131; border: 1px solid #474747; border-radius: 20px; display: flex; align-items: center; }
.defs { position: absolute; }
.dock i { width: 48px; height: 44px; display: flex; align-items: center; justify-content: center; position: relative; flex: none; margin-top: -2px; }
.dock i svg { width: 32px; height: 32px; overflow: visible; position: relative; filter: drop-shadow(0 1px 1px rgba(0,0,0,.4)); }
.run::after { content: ""; position: absolute; left: 22px; bottom: 0; width: 4px; height: 4px; border-radius: 50%; background: #fff; }
.hot::before { content: ""; position: absolute; left: 2px; top: 0; width: 44px; height: 44px; border-radius: 15px; background: #525252; }
.sep { width: 1px; height: 32px; margin: 0 1px; background: #555; flex: none; }
.dock .apps { width: 44px; }
```
